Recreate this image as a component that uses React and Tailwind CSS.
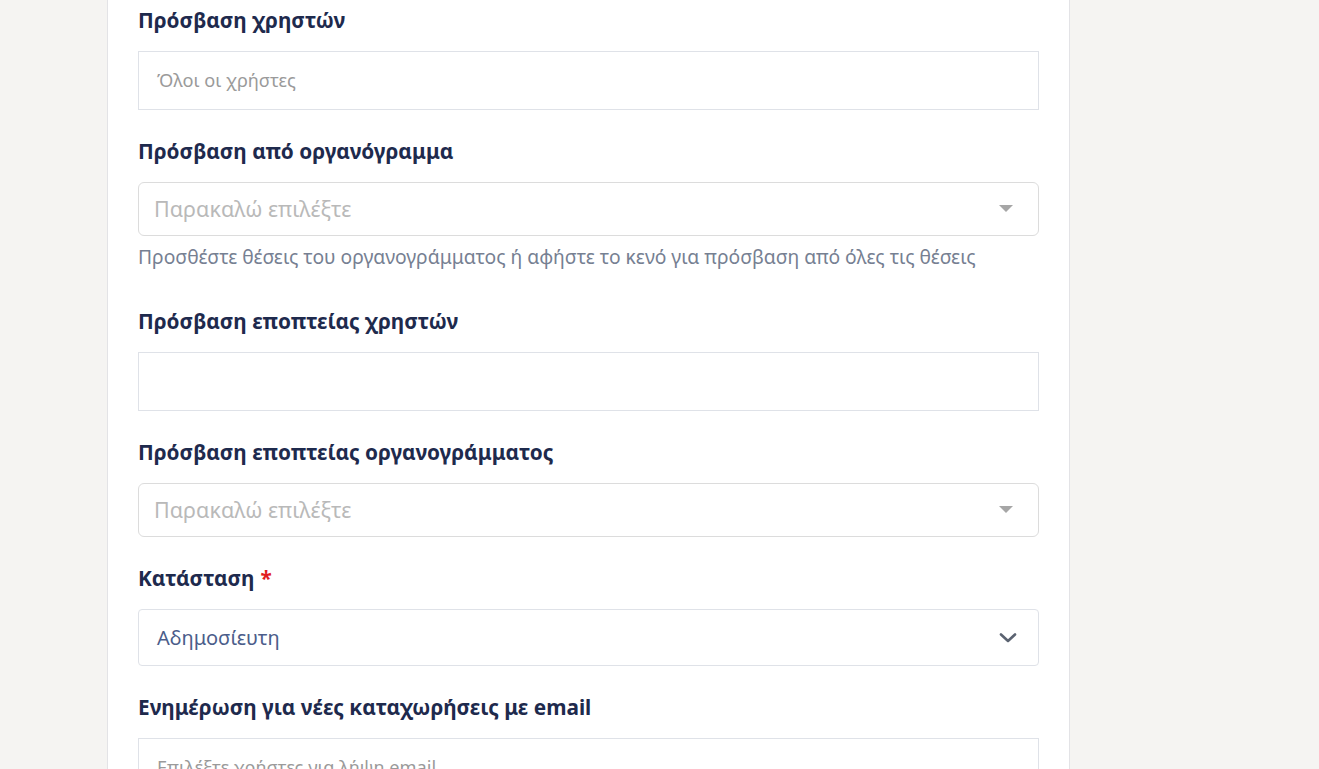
import React from "react";

const Label = ({ children, required }) => (
  <label className="block text-[20.8px] leading-[28px] font-bold text-[#1e2a4d] mb-[17px]">
    {children}
    {required && <span className="text-[#e11d1d] ml-[6px]">*</span>}
  </label>
);

const TextBox = ({ placeholder }) => (
  <div className="h-[59px] border border-[#dfe2e8] bg-white flex items-center px-[18px]">
    <span className="text-[18.2px] text-[#9a9a9a]">{placeholder}</span>
  </div>
);

const Caret = () => (
  <svg width="16" height="8" viewBox="0 0 16 8" className="shrink-0">
    <path d="M1 0 L15 0 L8 7 Z" fill="#a6a6a6" />
  </svg>
);

const Chevron = () => (
  <svg width="18" height="10" viewBox="0 0 18 10" className="shrink-0">
    <path d="M2 1.5 L9 8 L16 1.5" fill="none" stroke="#5b6371" strokeWidth="2.6" strokeLinecap="round" strokeLinejoin="round" />
  </svg>
);

const MultiSelect = ({ placeholder }) => (
  <div className="h-[54px] rounded-[6px] border border-[#dcdcdc] bg-white flex items-center justify-between pl-[15px] pr-[24px]">
    <span className="text-[21.5px] text-[#b9b9b9]">{placeholder}</span>
    <Caret />
  </div>
);

const App = () => {
  return (
    <div className="min-h-screen bg-[#f5f4f2] font-['Noto_Sans',sans-serif]">
      <div className="ml-[107px] w-[963px] min-h-screen bg-white border-x border-[#e3e3e6] px-[30px] pt-[6px]">
        {/* Πρόσβαση χρηστών */}
        <div className="mb-[27px]">
          <Label>Πρόσβαση χρηστών</Label>
          <TextBox placeholder="Όλοι οι χρήστες" />
        </div>

        {/* Πρόσβαση από οργανόγραμμα */}
        <div className="mb-[38px]">
          <Label>Πρόσβαση από οργανόγραμμα</Label>
          <MultiSelect placeholder="Παρακαλώ επιλέξτε" />
          <p className="mt-[9px] text-[19.3px] leading-[24px] text-[#768092]">
            Προσθέστε θέσεις του οργανογράμματος ή αφήστε το κενό για πρόσβαση από όλες τις θέσεις
          </p>
        </div>

        {/* Πρόσβαση εποπτείας χρηστών */}
        <div className="mb-[27px]">
          <Label>Πρόσβαση εποπτείας χρηστών</Label>
          <TextBox placeholder="" />
        </div>

        {/* Πρόσβαση εποπτείας οργανογράμματος */}
        <div className="mb-[27px]">
          <Label>Πρόσβαση εποπτείας οργανογράμματος</Label>
          <MultiSelect placeholder="Παρακαλώ επιλέξτε" />
        </div>

        {/* Κατάσταση */}
        <div className="mb-[27px]">
          <Label required>Κατάσταση</Label>
          <div className="h-[57px] rounded-[4px] border border-[#dfe2e8] bg-white flex items-center justify-between pl-[18px] pr-[21px]">
            <span className="text-[20px] text-[#4b5d8a]">Αδημοσίευτη</span>
            <Chevron />
          </div>
        </div>

        {/* Ενημέρωση για νέες καταχωρήσεις */}
        <div className="mb-[28px]">
          <Label>Ενημέρωση για νέες καταχωρήσεις με email</Label>
          <TextBox placeholder="Επιλέξτε χρήστες για λήψη email" />
        </div>
      </div>
    </div>
  );
};

export default App;
